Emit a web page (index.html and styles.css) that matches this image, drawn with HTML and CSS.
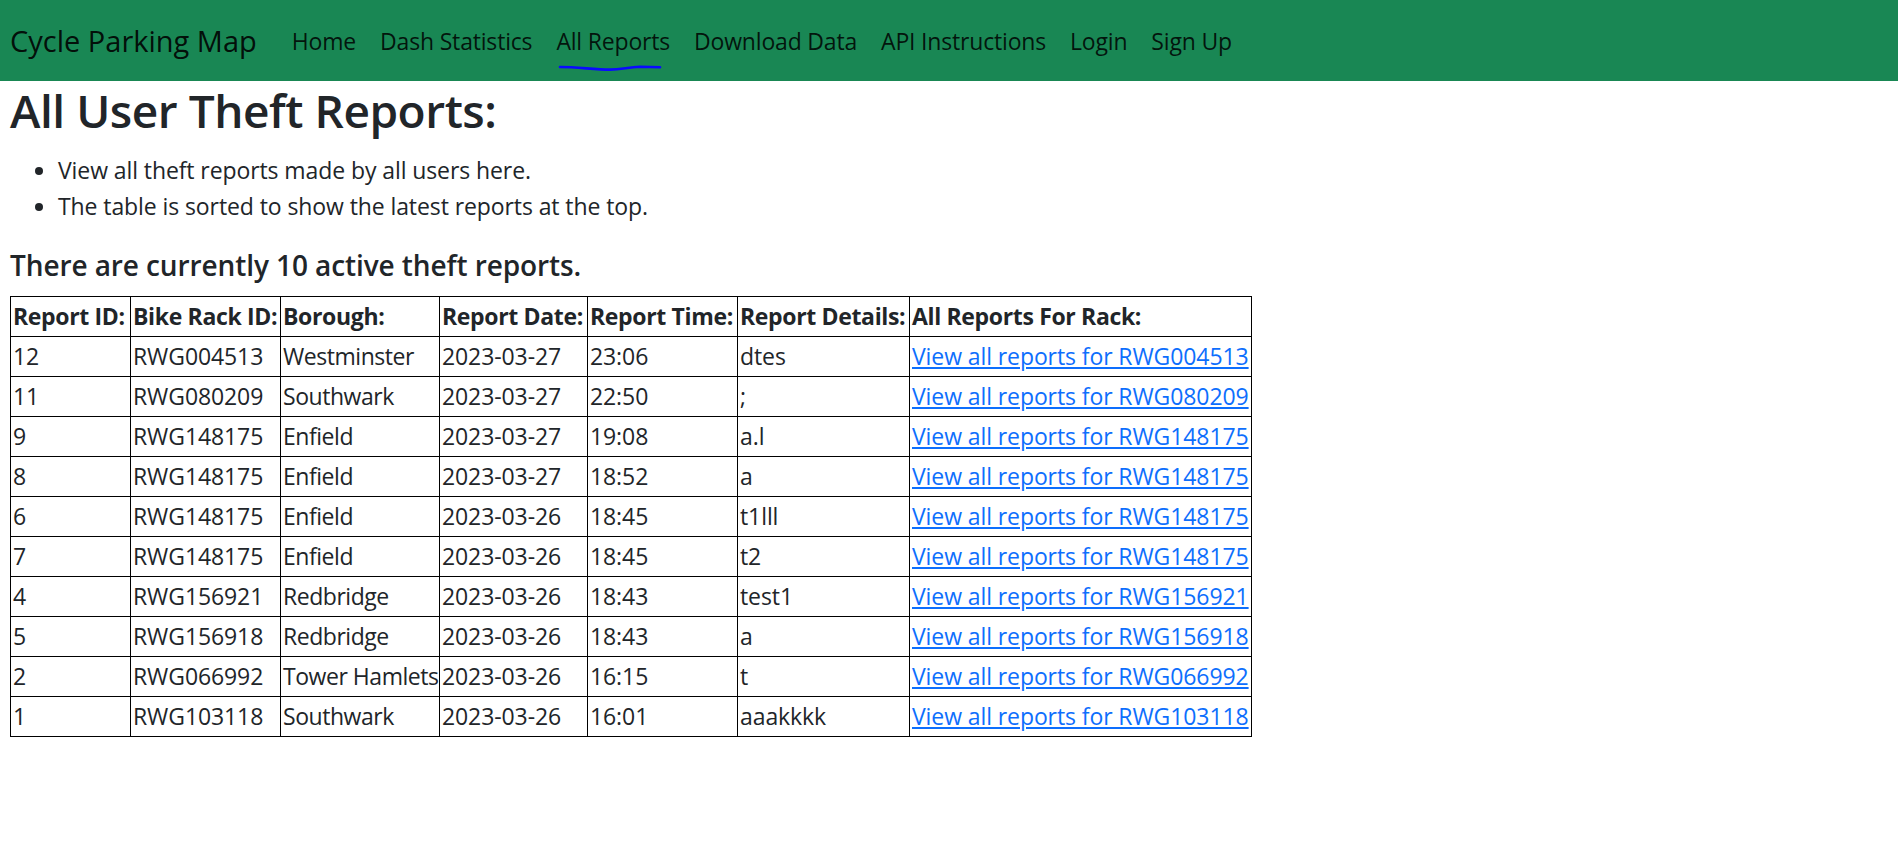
FILE: index.html
```html
<!DOCTYPE html>
<html lang="en">
<head>
<meta charset="utf-8">
<title>All Reports - Cycle Parking Map</title>
<link rel="stylesheet" href="styles.css">
</head>
<body>
<nav class="navbar">
  <a class="brand" href="#">Cycle Parking Map</a>
  <ul class="nav-links">
    <li><a class="nav-link" href="#">Home</a></li>
    <li><a class="nav-link" href="#">Dash Statistics</a></li>
    <li><a class="nav-link active" href="#">All Reports<svg class="scribble" width="104" height="8" viewBox="0 0 104 8"><path d="M2,3 C20,3 36,5.6 52,5.6 C64,5.6 70,3 82,2.8 L102,3.2" fill="none" stroke="#0a0aff" stroke-width="2.6" stroke-linecap="round"/></svg></a></li>
    <li><a class="nav-link" href="#">Download Data</a></li>
    <li><a class="nav-link" href="#">API Instructions</a></li>
    <li><a class="nav-link" href="#">Login</a></li>
    <li><a class="nav-link" href="#">Sign Up</a></li>
  </ul>
</nav>
<main class="content">
  <h1 class="title">All User Theft Reports:</h1>
  <ul class="notes">
    <li>View all theft reports made by all users here.</li>
    <li>The table is sorted to show the latest reports at the top.</li>
  </ul>
  <h4 class="count">There are currently 10 active theft reports.</h4>
  <table class="reports">
    <colgroup>
      <col class="c-id"><col class="c-rack"><col class="c-borough"><col class="c-date"><col class="c-time"><col class="c-details"><col class="c-link">
    </colgroup>
    <thead>
      <tr><th>Report ID:</th><th>Bike Rack ID:</th><th>Borough:</th><th>Report Date:</th><th>Report Time:</th><th>Report Details:</th><th>All Reports For Rack:</th></tr>
    </thead>
    <tbody>
      <tr><td>12</td><td>RWG004513</td><td class="borough">Westminster</td><td>2023-03-27</td><td>23:06</td><td>dtes</td><td><a href="#">View all reports for RWG004513</a></td></tr>
      <tr><td>11</td><td>RWG080209</td><td class="borough">Southwark</td><td>2023-03-27</td><td>22:50</td><td>;</td><td><a href="#">View all reports for RWG080209</a></td></tr>
      <tr><td>9</td><td>RWG148175</td><td class="borough">Enfield</td><td>2023-03-27</td><td>19:08</td><td>a.l</td><td><a href="#">View all reports for RWG148175</a></td></tr>
      <tr><td>8</td><td>RWG148175</td><td class="borough">Enfield</td><td>2023-03-27</td><td>18:52</td><td>a</td><td><a href="#">View all reports for RWG148175</a></td></tr>
      <tr><td>6</td><td>RWG148175</td><td class="borough">Enfield</td><td>2023-03-26</td><td>18:45</td><td>t1lll</td><td><a href="#">View all reports for RWG148175</a></td></tr>
      <tr><td>7</td><td>RWG148175</td><td class="borough">Enfield</td><td>2023-03-26</td><td>18:45</td><td>t2</td><td><a href="#">View all reports for RWG148175</a></td></tr>
      <tr><td>4</td><td>RWG156921</td><td class="borough">Redbridge</td><td>2023-03-26</td><td>18:43</td><td>test1</td><td><a href="#">View all reports for RWG156921</a></td></tr>
      <tr><td>5</td><td>RWG156918</td><td class="borough">Redbridge</td><td>2023-03-26</td><td>18:43</td><td>a</td><td><a href="#">View all reports for RWG156918</a></td></tr>
      <tr><td>2</td><td>RWG066992</td><td class="borough">Tower Hamlets</td><td>2023-03-26</td><td>16:15</td><td>t</td><td><a href="#">View all reports for RWG066992</a></td></tr>
      <tr><td>1</td><td>RWG103118</td><td class="borough">Southwark</td><td>2023-03-26</td><td>16:01</td><td>aaakkkk</td><td><a href="#">View all reports for RWG103118</a></td></tr>
    </tbody>
  </table>
</main>
</body>
</html>
```

FILE: styles.css
```css
* { box-sizing: border-box; }

body {
  margin: 0;
  font-family: "Open Sans", "Noto Sans", sans-serif;
  font-size: 23px;
  line-height: 36px;
  letter-spacing: -0.004em;
  color: #212529;
  background: #fff;
}

.navbar {
  display: flex;
  align-items: center;
  height: 81px;
  padding: 0 10px;
  background: #198754;
}

.brand {
  font-size: 29px;
  line-height: 44px;
  letter-spacing: 0;
  color: rgba(0, 0, 0, 0.9);
  text-decoration: none;
  margin-right: 23px;
}

.nav-links {
  display: flex;
  list-style: none;
  margin: 0;
  padding: 0;
}

.nav-link {
  position: relative;
  display: block;
  padding: 0 12px;
  line-height: 36px;
  letter-spacing: -0.008em;
  color: rgba(0, 0, 0, 0.85);
  text-decoration: none;
}

.scribble {
  position: absolute;
  left: 14px;
  top: 41px;
}

.content {
  padding: 0 10px;
}

.title {
  margin: 0 0 13px;
  font-size: 46px;
  line-height: 58px;
  font-weight: 600;
  letter-spacing: -0.01em;
}

.notes {
  margin: 0 0 24px;
  padding-left: 48px;
}

.count {
  margin: 0 0 13px;
  font-size: 28px;
  line-height: 35px;
  font-weight: 600;
}

.reports {
  border-collapse: collapse;
  table-layout: fixed;
  width: 1241px;
}

.reports th,
.reports td {
  border: 1px solid #000;
  padding: 1px 2px;
  line-height: 37px;
  text-align: left;
  white-space: nowrap;
}

.reports th {
  font-weight: 700;
  letter-spacing: -0.015em;
}

.reports td.borough {
  padding-right: 0;
  letter-spacing: -0.02em;
}

.reports a { color: #0d6efd; text-decoration: underline; }

.c-id { width: 120px; }
.c-rack { width: 150px; }
.c-borough { width: 159px; }
.c-date { width: 148px; }
.c-time { width: 150px; }
.c-details { width: 172px; }
.c-link { width: 342px; }
```
